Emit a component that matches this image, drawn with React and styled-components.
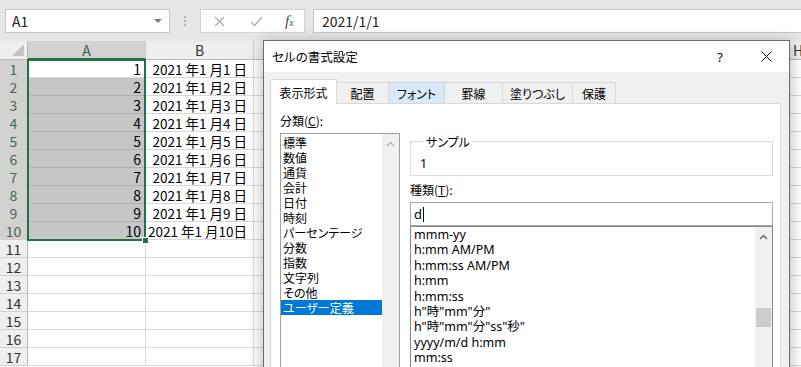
import React from "react";
import styled, { createGlobalStyle } from "styled-components";

const JP = `"Noto Sans CJK JP", "Noto Sans", sans-serif`;
const UI = `"Noto Sans", "Noto Sans CJK JP", sans-serif`;

const GlobalStyle = createGlobalStyle`
  html, body {
    margin: 0;
    padding: 0;
    background: #fff;
  }
  body {
    font-family: ${JP};
    color: #000;
  }
  * {
    box-sizing: border-box;
  }
`;

const Screen = styled.div`
  position: relative;
  width: 801px;
  height: 367px;
  overflow: hidden;
  background: #fff;
`;

/* formula bar */
const FormulaBar = styled.div`
  display: flex;
  align-items: flex-start;
  height: 41px;
  padding: 9px 0 0 5px;
  background: #e6e6e6;
`;

const NameBox = styled.div`
  display: flex;
  align-items: center;
  justify-content: space-between;
  width: 165px;
  height: 24px;
  padding: 0 7px 0 6px;
  background: #fff;
  border: 1px solid #c6c6c6;
  font-family: ${JP};
  font-size: 14px;
  color: #222;
`;

const DropArrow = styled.span`
  width: 0;
  height: 0;
  border-left: 4px solid transparent;
  border-right: 4px solid transparent;
  border-top: 4px solid #7a7a7a;
`;

const Grip = styled.div`
  width: 30px;
  height: 24px;
  display: flex;
  flex-direction: column;
  align-items: center;
  justify-content: center;
  gap: 2px;
  span {
    width: 2px;
    height: 2px;
    background: #b4b4b4;
  }
`;

const FxBox = styled.div`
  display: flex;
  align-items: center;
  width: 105px;
  height: 24px;
  padding-left: 13px;
  background: #fff;
  border: 1px solid #d4d4d4;
`;

const FxIcon = styled.span`
  margin-left: ${(p) => p.$gap}px;
  display: flex;
  align-items: center;
`;

const FxText = styled.span`
  font-family: "Liberation Serif", serif;
  font-style: italic;
  font-size: 15px;
  color: #4a4a4a;
  small {
    font-size: 10px;
  }
`;

const FormulaInput = styled.div`
  flex: 1;
  height: 24px;
  margin-left: 8px;
  padding-left: 8px;
  background: #fff;
  border: 1px solid #c6c6c6;
  border-right: none;
  font-family: ${JP};
  font-size: 14px;
  line-height: 22px;
  color: #222;
`;

/* sheet */
const Sheet = styled.div`
  position: relative;
  display: grid;
  grid-template-columns: 28px 118px 108px repeat(6, 99px);
  grid-template-rows: 19px repeat(17, 18px);
  font-family: ${JP};
  font-size: 14px;
`;

const Corner = styled.div`
  position: relative;
  background: #efefef;
  border-right: 1px solid #b8b8b8;
  border-bottom: 1px solid #b8b8b8;
  &::after {
    content: "";
    position: absolute;
    right: 3px;
    bottom: 3px;
    border-left: 12px solid transparent;
    border-bottom: 12px solid #c4c4c4;
  }
`;

const ColHead = styled.div`
  display: flex;
  align-items: center;
  justify-content: center;
  background: ${(p) => (p.$active ? "#d2d2d2" : "#efefef")};
  border-right: 1px solid #d0d0d0;
  border-bottom: ${(p) => (p.$active ? "2px solid #217346" : "1px solid #b8b8b8")};
  color: ${(p) => (p.$active ? "#3d5f4c" : "#333")};
  line-height: 1;
`;

const RowHead = styled.div`
  display: flex;
  align-items: center;
  justify-content: center;
  padding-top: 1px;
  background: ${(p) => (p.$active ? "#d2d2d2" : "#efefef")};
  border-right: 1px solid #b8b8b8;
  border-bottom: 1px solid #d0d0d0;
  color: ${(p) => (p.$active ? "#3f6b52" : "#333")};
  line-height: 1;
`;

const Cell = styled.div`
  padding: 0 ${(p) => p.$pr}px 0 0;
  background: ${(p) => (p.$sel ? "#c6c6c6" : "#fff")};
  border-right: 1px solid #d9d9d9;
  border-bottom: 1px solid ${(p) => (p.$sel ? "#b0b0b0" : "#d9d9d9")};
  text-align: right;
  white-space: nowrap;
  font-size: ${(p) => p.$fs}px;
  line-height: 19px;
  color: #000;
  direction: rtl;
  span {
    direction: ltr;
    unicode-bidi: isolate;
  }
`;

const Selection = styled.div`
  position: absolute;
  left: 27px;
  top: 18px;
  width: 119px;
  height: 182px;
  border: 2px solid #217346;
  pointer-events: none;
`;

const FillHandle = styled.div`
  position: absolute;
  right: -5px;
  bottom: -5px;
  width: 7px;
  height: 7px;
  background: #217346;
  border: 1px solid #fff;
`;

/* dialog */
const Dialog = styled.div`
  position: absolute;
  left: 263px;
  top: 40px;
  width: 527px;
  height: 340px;
  display: flex;
  flex-direction: column;
  background: #f0f0f0;
  border: 1px solid #6d6d6d;
  box-shadow: 0 3px 14px rgba(0, 0, 0, 0.3);
  font-family: ${JP};
  font-size: 12px;
`;

const TitleBar = styled.div`
  display: flex;
  align-items: center;
  height: 31px;
  background: #fff;
`;

const Title = styled.div`
  flex: 1;
  padding-left: 8px;
  font-size: 12.5px;
  font-feature-settings: "palt";
  color: #000;
`;

const TitleButton = styled.div`
  width: 46px;
  height: 31px;
  display: flex;
  align-items: center;
  justify-content: center;
  font-family: ${UI};
  font-size: 13px;
`;

const DialogBody = styled.div`
  flex: 1;
  display: flex;
  flex-direction: column;
  padding: 7px 8px 0 6px;
`;

const TabRow = styled.div`
  position: relative;
  z-index: 1;
  display: flex;
  align-items: flex-end;
  height: 25px;
  margin-bottom: -1px;
`;

const Tab = styled.div`
  width: ${(p) => p.$w}px;
  height: ${(p) => (p.$selected ? 25 : 21)}px;
  margin-bottom: ${(p) => (p.$selected ? 0 : 1)}px;
  display: flex;
  align-items: center;
  justify-content: center;
  background: ${(p) => (p.$selected ? "#fff" : p.$hover ? "#d9e9f7" : "#f0f0f0")};
  border: 1px solid ${(p) => (p.$hover ? "#c3daef" : "#d9d9d9")};
  border-bottom: none;
  font-size: 12px;
  font-feature-settings: "palt";
  &:not(:first-child) {
    border-left: none;
  }
`;

const Panel = styled.div`
  flex: 1;
  display: grid;
  grid-template-columns: 120px 363px;
  column-gap: 10px;
  align-content: start;
  padding: 8px 0 0 9px;
  background: #fff;
  border: 1px solid #d9d9d9;
`;

const Column = styled.div`
  display: flex;
  flex-direction: column;
`;

const FieldLabel = styled.div`
  height: 18px;
  margin-top: ${(p) => p.$mt || 0}px;
  font-size: 12px;
  line-height: 18px;
  font-feature-settings: "palt";
`;

const ListBox = styled.div`
  display: flex;
  height: ${(p) => p.$h}px;
  margin-top: ${(p) => p.$mt || 0}px;
  background: #fff;
  border: 1px solid ${(p) => p.$border};
`;

const ListItems = styled.div`
  flex: 1;
  padding-top: ${(p) => p.$pt || 0}px;
`;

const CatItem = styled.div`
  height: 15px;
  padding-left: 2px;
  line-height: 15px;
  font-size: 12px;
  font-feature-settings: "palt";
  background: ${(p) => (p.$selected ? "#0078d7" : "transparent")};
  color: ${(p) => (p.$selected ? "#fff" : "#000")};
`;

const TypeItem = styled.div`
  height: 15.4px;
  padding-left: 3px;
  line-height: 15.4px;
  font-family: ${UI};
  font-size: 12.5px;
  white-space: pre;
`;

const VScroll = styled.div`
  width: 17px;
  display: flex;
  flex-direction: column;
  align-items: center;
  background: #f0f0f0;
`;

const ScrollArrow = styled.div`
  height: 19px;
  display: flex;
  align-items: center;
  justify-content: center;
`;

const Thumb = styled.div`
  width: 15px;
  height: 19px;
  margin-top: ${(p) => p.$offset}px;
  background: #cdcdcd;
`;

const SampleBox = styled.fieldset`
  margin: 23px 0 0 0;
  padding: 8px 9px 4px;
  min-width: 0;
  border: 1px solid #dcdcdc;
`;

const SampleLegend = styled.legend`
  margin-left: 4px;
  padding: 0 2px;
  font-size: 12px;
  line-height: 13px;
  font-feature-settings: "palt";
`;

const SampleValue = styled.div`
  font-family: ${UI};
  font-size: 12.5px;
  line-height: 15px;
`;

const TextInput = styled.div`
  display: flex;
  align-items: center;
  height: 24px;
  margin-top: 3px;
  padding-left: 3px;
  background: #fff;
  border: 1px solid #a9a9a9;
  font-family: ${UI};
  font-size: 13px;
`;

const Caret = styled.span`
  width: 1px;
  height: 15px;
  margin-left: 1px;
  background: #000;
`;

const Chevron = ({ color }) => (
  <svg width="9" height="6" viewBox="0 0 9 6">
    <polyline points="1,5 4.5,1.5 8,5" fill="none" stroke={color} strokeWidth="1.3" />
  </svg>
);

const columns = ["A", "B", "C", "D", "E", "F", "G", "H"];
const rows = Array.from({ length: 17 }, (_, i) => i + 1);

const dateText = (n) => (n < 10 ? `2021 年1 月${n} 日` : `2021 年1 月${n}日`);

const tabs = [
  { label: "表示形式", w: 67, selected: true },
  { label: "配置", w: 52 },
  { label: "フォント", w: 56, hover: true },
  { label: "罫線", w: 58 },
  { label: "塗りつぶし", w: 70 },
  { label: "保護", w: 43 },
];

const categories = [
  "標準",
  "数値",
  "通貨",
  "会計",
  "日付",
  "時刻",
  "パーセンテージ",
  "分数",
  "指数",
  "文字列",
  "その他",
  "ユーザー定義",
];

const formats = [
  "mmm-yy",
  "h:mm AM/PM",
  "h:mm:ss AM/PM",
  "h:mm",
  "h:mm:ss",
  'h"時"mm"分"',
  'h"時"mm"分"ss"秒"',
  "yyyy/m/d h:mm",
  "mm:ss",
  "mm:ss.0",
];

const App = () => {
  return (
    <Screen>
      <GlobalStyle />
      <FormulaBar>
        <NameBox>
          A1
          <DropArrow />
        </NameBox>
        <Grip>
          <span />
          <span />
          <span />
        </Grip>
        <FxBox>
          <FxIcon $gap={0}>
            <svg width="11" height="11" viewBox="0 0 11 11">
              <path d="M1 1L10 10M10 1L1 10" stroke="#ababab" strokeWidth="1.2" />
            </svg>
          </FxIcon>
          <FxIcon $gap={25}>
            <svg width="13" height="11" viewBox="0 0 13 11">
              <path d="M1 6L4.5 9.5L12 1.5" fill="none" stroke="#ababab" strokeWidth="1.3" />
            </svg>
          </FxIcon>
          <FxIcon $gap={22}>
            <FxText>
              f<small>x</small>
            </FxText>
          </FxIcon>
        </FxBox>
        <FormulaInput>2021/1/1</FormulaInput>
      </FormulaBar>

      <Sheet>
        <Corner />
        {columns.map((c) => (
          <ColHead key={c} $active={c === "A"}>
            {c}
          </ColHead>
        ))}
        {rows.map((r) => (
          <React.Fragment key={r}>
            <RowHead $active={r <= 10}>{r}</RowHead>
            {columns.map((c) => (
              <Cell
                key={c}
                $sel={c === "A" && r >= 2 && r <= 10}
                $fs={c === "B" ? 13.5 : 14}
                $pr={c === "B" ? 6 : 4}
              >
                {c === "A" && r <= 10 && <span>{r}</span>}
                {c === "B" && r <= 10 && <span>{dateText(r)}</span>}
              </Cell>
            ))}
          </React.Fragment>
        ))}
        <Selection>
          <FillHandle />
        </Selection>
      </Sheet>

      <Dialog>
        <TitleBar>
          <Title>セルの書式設定</Title>
          <TitleButton>?</TitleButton>
          <TitleButton>
            <svg width="11" height="11" viewBox="0 0 11 11">
              <path d="M0.5 0.5L10.5 10.5M10.5 0.5L0.5 10.5" stroke="#000" strokeWidth="1" />
            </svg>
          </TitleButton>
        </TitleBar>
        <DialogBody>
          <TabRow>
            {tabs.map((t) => (
              <Tab key={t.label} $w={t.w} $selected={t.selected} $hover={t.hover}>
                {t.label}
              </Tab>
            ))}
          </TabRow>
          <Panel>
            <Column>
              <FieldLabel>
                分類(<u>C</u>):
              </FieldLabel>
              <ListBox $h={240} $mt={3} $border="#a0a0a0">
                <ListItems $pt={1}>
                  {categories.map((c) => (
                    <CatItem key={c} $selected={c === "ユーザー定義"}>
                      {c}
                    </CatItem>
                  ))}
                </ListItems>
                <VScroll>
                  <ScrollArrow>
                    <Chevron color="#b4b4b4" />
                  </ScrollArrow>
                </VScroll>
              </ListBox>
            </Column>
            <Column>
              <SampleBox>
                <SampleLegend>サンプル</SampleLegend>
                <SampleValue>1</SampleValue>
              </SampleBox>
              <FieldLabel $mt={5}>
                種類(<u>T</u>):
              </FieldLabel>
              <TextInput>
                d
                <Caret />
              </TextInput>
              <ListBox $h={200} $border="#828790">
                <ListItems>
                  {formats.map((f) => (
                    <TypeItem key={f}>{f}</TypeItem>
                  ))}
                </ListItems>
                <VScroll>
                  <ScrollArrow>
                    <Chevron color="#606060" />
                  </ScrollArrow>
                  <Thumb $offset={62} />
                </VScroll>
              </ListBox>
            </Column>
          </Panel>
        </DialogBody>
      </Dialog>
    </Screen>
  );
};

export default App;
